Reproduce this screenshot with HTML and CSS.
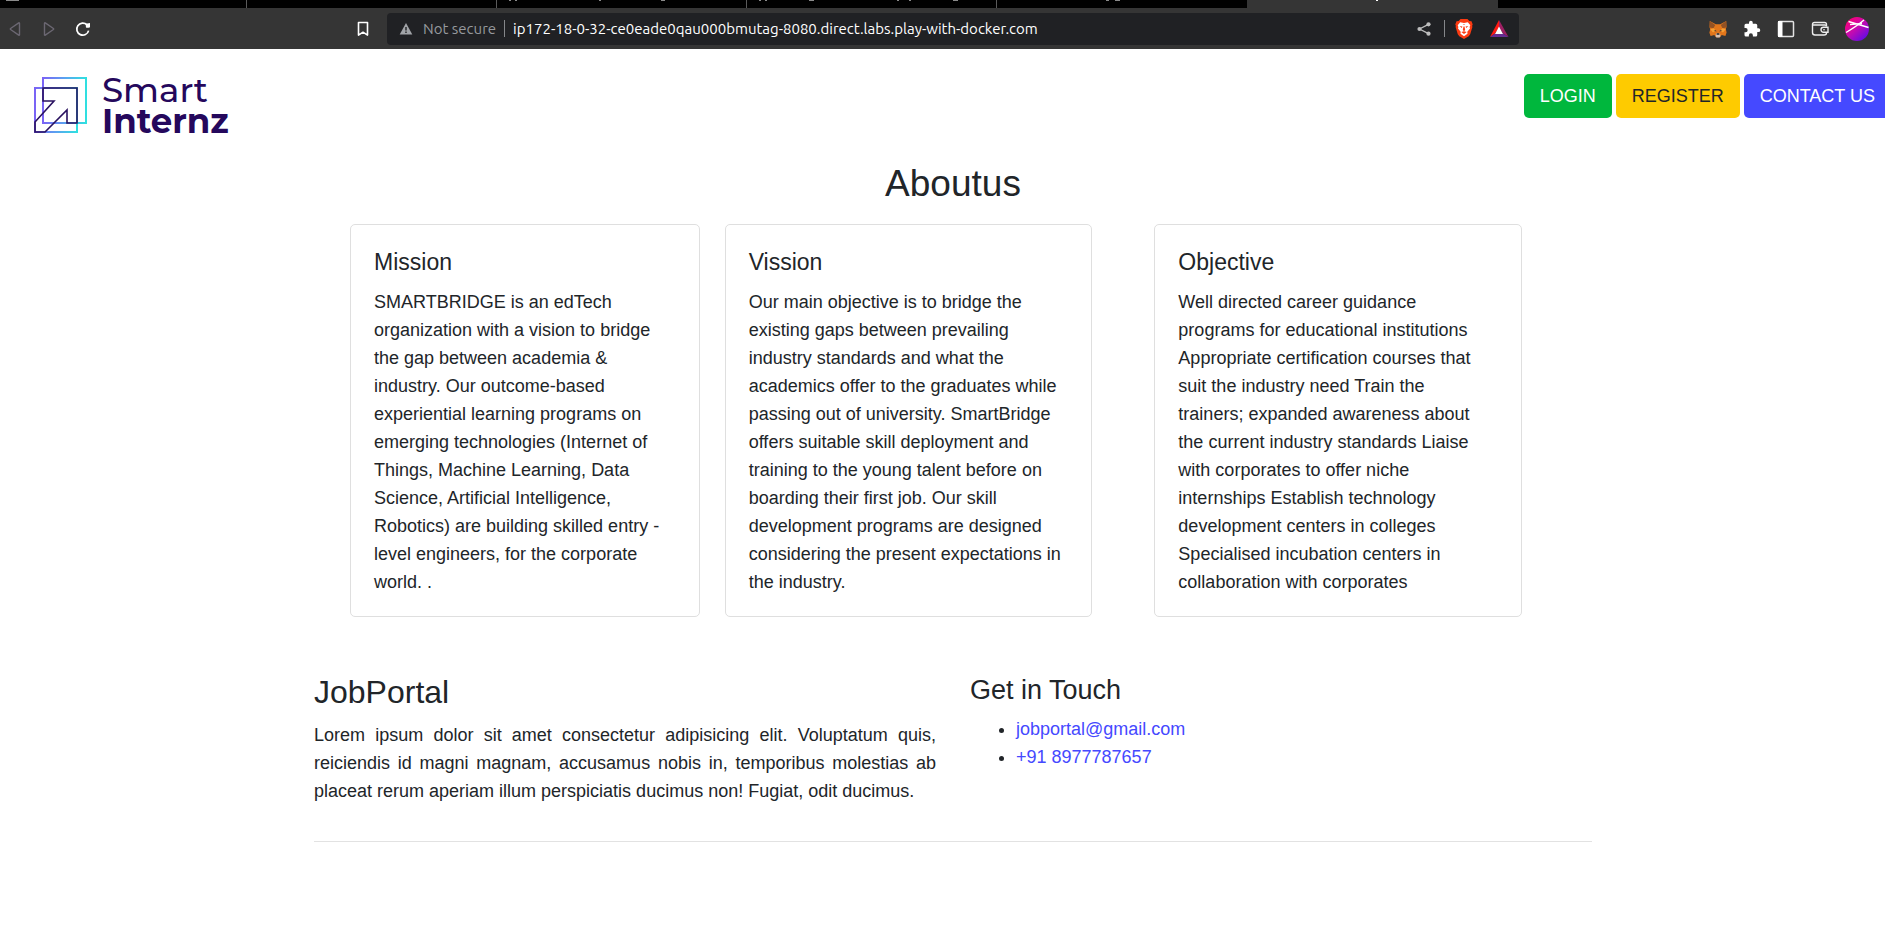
FILE: index.html
```html
<!DOCTYPE html>
<html lang="en">
<head>
<meta charset="utf-8">
<title>Smart Internz</title>
<link rel="stylesheet" href="styles.css">
</head>
<body>
<div class="browser">
  <div class="tabs">
    <div class="tab"><svg class="tab-marks" width="20" height="2" viewBox="0 0 20 2" aria-hidden="true"><path d="M6 0h13v1H6z" fill="#8a8a8a"/></svg></div>
    <div class="tab"></div>
    <div class="tab"><svg class="tab-marks" width="200" height="2" viewBox="0 0 200 2" aria-hidden="true"><path d="M12 0h2v1h-2zM18 0h2v1h-2zM102 0h2v1h-2zM164 0h4v1h-4z" fill="#8a8a8a"/></svg></div>
    <div class="tab"><svg class="tab-marks" width="220" height="2" viewBox="0 0 220 2" aria-hidden="true"><path d="M12 0h2v1h-2zM18 0h2v1h-2zM62 0h5v1h-5zM150 0h2v1h-2zM162 0h2v1h-2zM206 0h5v1h-5z" fill="#8a8a8a"/></svg></div>
    <div class="tab"><svg class="tab-marks" width="140" height="2" viewBox="0 0 140 2" aria-hidden="true"><path d="M109 0h3v1h-3zM118 0h5v1h-5z" fill="#8a8a8a"/></svg></div>
    <div class="tab tab-active"><svg class="tab-marks" width="140" height="2" viewBox="0 0 140 2" aria-hidden="true"><path d="M129 0h2v1h-2z" fill="#fff"/></svg></div>
  </div>
  <div class="toolbar">
    <div class="nav-buttons">
      <button class="icon-button" aria-label="Back"><svg width="16" height="16" viewBox="0 0 16 16"><path d="M12.5 2.3v11.4q0 .8-.8.4L3.6 8.5q-.6-.5 0-1l8.1-5.6q.8-.4.8.4z" fill="none" stroke="#6b6772" stroke-width="1.4"/></svg></button>
      <button class="icon-button" aria-label="Forward"><svg width="16" height="16" viewBox="0 0 16 16"><path d="M3.5 2.3v11.4q0 .8.8.4l8.1-5.6q.6-.5 0-1L4.3 1.9q-.8-.4-.8.4z" fill="none" stroke="#6b6772" stroke-width="1.4"/></svg></button>
      <button class="icon-button" aria-label="Reload"><svg width="16" height="16" viewBox="0 0 16 16"><path d="M13.6 9.6A6 6 0 1 1 12 3.9" fill="none" stroke="#fff" stroke-width="1.7"/><path d="M10.6 2.8l4.4-.8v4.2q-2.6 1-4 .3z" fill="#fff"/></svg></button>
    </div>
    <button class="icon-button bookmark" aria-label="Bookmark this page"><svg width="16" height="16" viewBox="0 0 16 16"><path d="M3.5 1.5h9v12.6L8 11.2l-4.500 2.900z" fill="none" stroke="#fff" stroke-width="1.6" stroke-linejoin="round"/></svg></button>
    <div class="address">
      <svg class="warning" width="14" height="14" viewBox="0 0 14 14" aria-hidden="true"><path d="M7 1l6.300 11.500H.7z" fill="#a1a4a8"/><path d="M6.300 5h1.400v3.500H6.300zM6.300 9.500h1.400v1.400H6.300z" fill="#202124"/></svg>
      <label class="security" for="url">Not secure</label>
      <span class="rule"></span>
      <input class="url" id="url" type="text" value="ip172-18-0-32-ce0eade0qau000bmutag-8080.direct.labs.play-with-docker.com">
      <button class="icon-button" aria-label="Share"><svg width="16" height="16" viewBox="0 0 16 16"><path d="M12.500 3.300L3.500 8l9 4.700" fill="none" stroke="#bdbdbd" stroke-width="1.300"/><circle cx="12.500" cy="3.300" r="2.100" fill="#bdbdbd"/><circle cx="3.500" cy="8" r="2.100" fill="#bdbdbd"/><circle cx="12.500" cy="12.700" r="2.100" fill="#bdbdbd"/></svg></button>
      <span class="rule"></span>
      <button class="icon-button" aria-label="Shields"><svg width="18" height="20" viewBox="0 0 18 20"><path d="M5.500 0h7l1.800 2 2.200.3 1.200 3.200-.6 1.200.3 1.200-2.200 7.300-1.500 2L9 20l-4.700-2.800-1.500-2L.6 7.900l.3-1.200L.3 5.500l1.200-3.200L3.700 2z" fill="#fb3b12"/><path d="M5.200 3.200L9 3.900l3.800-.7 2.500 3-.7 1.700.4 1.600-2.700 3.300.2 2L9 17.200l-3.500-2.400.2-2L3 9.500l.4-1.600-.7-1.700z" fill="#fff"/><path d="M4.600 7l2.800.6-.6 1.400zM13.400 7l-2.800.6.600 1.400zM7.700 5.300h2.600L9 6zM8.500 7.500h1L10.200 11 9 12.300 7.800 11zM6.300 13l2.700-.8 2.700.8L9 15.100z" fill="#fb3b12"/></svg></button>
      <button class="icon-button rewards" aria-label="Rewards"><svg width="20" height="18" viewBox="0 0 20 18"><path d="M10 0v7.500L6 13.500 1 17z" fill="#ff1a12"/><path d="M10 0v7.500l4 6 5.500 3.500z" fill="#9e1f63"/><path d="M1 17l5-3.500h8l5.500 3.500z" fill="#662d91"/><path d="M10 6.500l4 7.500H6z" fill="#fff"/></svg></button>
    </div>
    <div class="extensions">
      <button class="icon-button" aria-label="Wallet extension"><svg width="18" height="18" viewBox="0 0 18 18"><path d="M.8 1l6 3.200h4.400l6-3.200.3 6-.7 2 .8 3.500-1.200 3.600-3.700-1L11 17.200H7l-1.700-2.100-3.700 1L.4 12.700 1.200 9.200l-.7-2z" fill="#e2761b"/><path d="M.8 1l5.400 4L4.500 8.200.7 7.500zM17.200 1l-5.400 4 1.700 3.200 3.800-.7z" fill="#935224"/><path d="M1.200 9.200l3.500-1 1.800 2.400-2.400 1.800zM16.800 9.200l-3.500-1-1.800 2.400 2.400 1.800z" fill="#f6a136"/><path d="M4.700 10l2.400.6.2 1.200zM13.300 10l-2.400.6-.2 1.200z" fill="#2b2f36"/><path d="M6.800 14l1-.7h2.400l1 .7v2.500L10.500 17.400h-3l-.7-.9z" fill="#d7c1b3"/><path d="M7.800 13.200h2.400l.3 1.500h-3z" fill="#222"/></svg></button>
      <button class="icon-button" aria-label="Extensions"><svg width="18" height="18" viewBox="0 0 24 24"><path fill="#fff" d="M20.500 11H19V7a2 2 0 0 0-2-2h-4V3.500a2.500 2.500 0 0 0-5 0V5H4a2 2 0 0 0-2 2v3.800h1.500a2.700 2.700 0 0 1 0 5.400H2V20a2 2 0 0 0 2 2h3.800v-1.500a2.700 2.700 0 0 1 5.400 0V22H17a2 2 0 0 0 2-2v-4h1.500a2.500 2.500 0 0 0 0-5z"/></svg></button>
      <button class="icon-button" aria-label="Side panel"><svg width="18" height="18" viewBox="0 0 18 18"><rect x="1.500" y="1.500" width="15" height="15" rx="1" fill="none" stroke="#e4e4e4" stroke-width="1.500"/><path d="M1 1h4.500v16H1z" fill="#fff"/></svg></button>
      <button class="icon-button" aria-label="Wallet"><svg width="18" height="18" viewBox="0 0 18 18"><path d="M15.500 6V4.500q0-2-2-2h-10q-2 0-2 2v8q0 2.500 2.500 2.500h9q2.500 0 2.500-2M1.500 5H14q1.500 0 1.500 1.500" fill="none" stroke="#ededed" stroke-width="1.400"/><path d="M17 7.200h-4.500a2.500 2.500 0 0 0 0 5H17z" fill="none" stroke="#ededed" stroke-width="1.400"/><circle cx="13" cy="9.700" r=".8" fill="#fff"/></svg></button>
      <button class="icon-button" aria-label="Profile"><svg width="24" height="24" viewBox="0 0 24 24"><defs><linearGradient id="profile" x1=".1" y1=".1" x2=".8" y2=".9"><stop offset="0" stop-color="#ff0075"/><stop offset=".5" stop-color="#c40bb0"/><stop offset="1" stop-color="#6a0be0"/></linearGradient></defs><circle cx="12" cy="12" r="12" fill="url(#profile)"/><path d="M3.500 4.500L23.500 10.500M1 15.500Q12 9 19 3M5 7.500L17 6.500" fill="none" stroke="#fff" stroke-width="1.400"/></svg></button>
    </div>
  </div>
</div>

<header class="header">
  <svg class="logo" width="200" height="80" viewBox="0 -12 200 80" role="img" aria-label="Smart Internz">
    <defs><linearGradient id="frame" x1="0" y1="0" x2="1" y2="0"><stop offset="0" stop-color="#7a63f5"/><stop offset=".5" stop-color="#5aa2f0"/><stop offset="1" stop-color="#2fe0e0"/></linearGradient></defs>
    <g fill="none" stroke-width="2">
      <rect x="9" y="2" width="43" height="45" stroke="url(#frame)"/>
      <rect x="1" y="12" width="42" height="44" stroke="url(#frame)"/>
      <path d="M9 12H43V47H33V34L11 56H1V46L20 25H9z" stroke="#2a1260" stroke-width="1.600"/>
    </g>
    <text class="logo-top" x="68" y="26">Smart</text>
    <text class="logo-bottom" x="68" y="57">Internz</text>
  </svg>
  <nav class="actions">
    <a class="btn btn-success" href="#">LOGIN</a>
    <a class="btn btn-warning" href="#">REGISTER</a>
    <a class="btn btn-primary" href="#">CONTACT US</a>
  </nav>
</header>

<main class="page">
  <div class="container">
    <h2 class="title">Aboutus</h2>
    <section class="cards">
      <article class="card">
        <h5 class="card-title">Mission</h5>
        <p class="card-text">SMARTBRIDGE is an edTech organization with a vision to bridge the gap between academia &amp; industry. Our outcome-based experiential learning programs on emerging technologies (Internet of Things, Machine Learning, Data Science, Artificial Intelligence, Robotics) are building skilled entry - level engineers, for the corporate world. .</p>
      </article>
      <article class="card">
        <h5 class="card-title">Vission</h5>
        <p class="card-text">Our main objective is to bridge the existing gaps between prevailing industry standards and what the academics offer to the graduates while passing out of university. SmartBridge offers suitable skill deployment and training to the young talent before on boarding their first job. Our skill development programs are designed considering the present expectations in the industry.</p>
      </article>
      <article class="card card-last">
        <h5 class="card-title">Objective</h5>
        <p class="card-text">Well directed career guidance programs for educational institutions Appropriate certification courses that suit the industry need Train the trainers; expanded awareness about the current industry standards Liaise with corporates to offer niche internships Establish technology development centers in colleges Specialised incubation centers in collaboration with corporates</p>
      </article>
    </section>
    <footer class="footer">
      <div class="about">
        <h3 class="brand">JobPortal</h3>
        <p class="about-text">Lorem ipsum dolor sit amet consectetur adipisicing elit. Voluptatum quis, reiciendis id magni magnam, accusamus nobis in, temporibus molestias ab placeat rerum aperiam illum perspiciatis ducimus non! Fugiat, odit ducimus.</p>
      </div>
      <div class="contact">
        <h4 class="contact-title">Get in Touch</h4>
        <ul class="contact-list">
          <li><a href="#">jobportal@gmail.com</a></li>
          <li><a href="#">+91 8977787657</a></li>
        </ul>
      </div>
    </footer>
  </div>
</main>
</body>
</html>
```
FILE: styles.css
```css
* { box-sizing: border-box; }

body {
  margin: 0;
  overflow-x: hidden;
  background: #fff;
  color: #212529;
  font-family: "Liberation Sans", Arial, sans-serif;
  font-size: 18px;
  line-height: 28px;
}

h2, h3, h4, h5, p, ul { margin: 0; font-weight: 400; }

/* Browser window */
.browser { background: #353535; font-family: Ubuntu, "Noto Sans", sans-serif; }
.tabs { display: flex; height: 8px; background: #000; }
.tab { width: 250px; border-right: 1px solid #5a5a5a; }
.tab:first-child { width: 247px; }
.tab:nth-child(5) { border-right: 0; }
.tab-active { width: 251px; border-right: 0; background: #353535; }
.tab-marks { display: block; }

.toolbar {
  display: grid;
  grid-template-columns: 355px 32px 1fr 366px;
  align-items: center;
  height: 41px;
}
.nav-buttons { display: flex; gap: 18px; padding-left: 7px; }
.icon-button { display: flex; padding: 0; border: 0; background: none; }
.address {
  display: flex;
  align-items: center;
  height: 32px;
  padding: 0 10px 0 12px;
  border-radius: 4px;
  background: #202124;
}
.security { margin: 0 8px 0 10px; color: #96999d; font-size: 15px; line-height: 20px; }
.rule { width: 1px; height: 17px; background: #85878a; }
.url {
  flex: 1;
  min-width: 0;
  margin: 0 8px;
  padding: 0;
  border: 0;
  outline: 0;
  background: none;
  color: #fff;
  font-family: inherit;
  font-size: 15px;
  line-height: 20px;
}
.address .icon-button + .rule { margin: 0 10px 0 12px; }
.rewards { margin-left: 16px; }
.extensions {
  display: flex;
  justify-content: flex-end;
  align-items: center;
  gap: 16px;
  padding-right: 16px;
}

/* Page header */
.header {
  display: flex;
  justify-content: space-between;
  align-items: flex-start;
  margin-right: -6px;
  padding: 15px 0 0 34px;
}
.logo { font-family: Montserrat, Inter, sans-serif; }
.logo-top { fill: #25085c; font-size: 34px; font-weight: 500; }
.logo-bottom { fill: #25085c; font-size: 34px; font-weight: 700; }
.actions { display: flex; gap: 4px; margin-top: 10px; }
.btn {
  padding: 8px 16px;
  border-radius: 5px;
  line-height: 28px;
  text-decoration: none;
}
.btn-success { background: #00b73d; color: #fff; }
.btn-warning { background: #fecb00; color: #212529; }
.btn-primary { background: #4549ff; color: #fff; }

/* Content */
.page { padding: 18px 0 0 21px; }
.container { max-width: 1278px; margin: 0 auto; }
.title { font-size: 37px; line-height: 44px; text-align: center; }
.cards {
  display: grid;
  grid-template-columns: 350fr 368fr 405fr;
  gap: 25px;
  margin-top: 18px;
  padding: 0 70px 0 36px;
}
.card {
  padding: 23px 23px 20px;
  border: 1px solid #dfdfdf;
  border-radius: 5px;
}
.card-last { margin-left: 37px; padding-right: 42px; }
.card-title { margin-bottom: 12px; font-size: 23px; line-height: 28px; }

.footer {
  display: grid;
  grid-template-columns: 1fr 1fr;
  gap: 34px;
  margin-top: 56px;
  padding-bottom: 36px;
  border-bottom: 1px solid #e2e2e2;
}
.brand { margin-bottom: 10px; font-size: 32px; line-height: 38px; }
.about-text { text-align: justify; }
.contact-title { margin-bottom: 8px; font-size: 27px; line-height: 34px; }
.contact-list { padding-left: 46px; }
.contact-list a { color: #4549ff; text-decoration: none; }
```
